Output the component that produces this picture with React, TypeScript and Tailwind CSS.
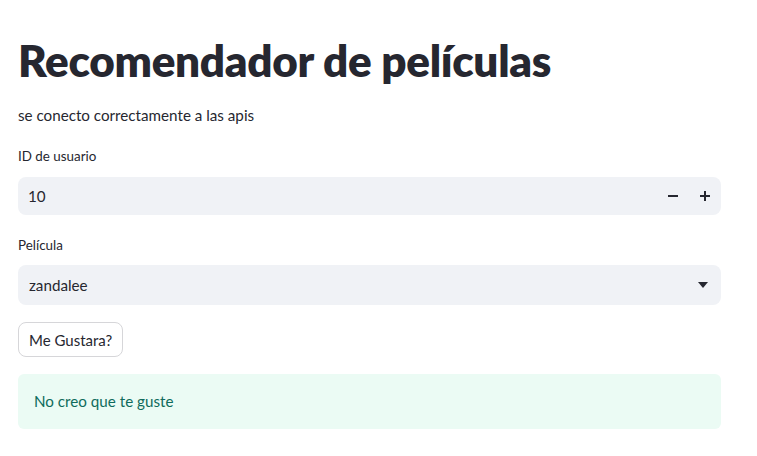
import React from "react";

const font = { fontFamily: '"Source Sans Pro", "Lato", "Liberation Sans", sans-serif' };

export default function App ()
{
  return (
    <div className="min-h-screen bg-white text-[#262730]" style={font}>
      <div className="w-[703px] ml-[18px] pt-[30px] flex flex-col">
        <h1 className="text-[44px] font-extrabold leading-[60px] tracking-[-0.3px]">
          Recomendador de películas
        </h1>
        <p className="text-[15.2px] leading-[24px] mt-[13px]">se conecto correctamente a las apis</p>

        <label className="text-[13.4px] leading-[20px] mt-[19px]">ID de usuario</label>
        <div className="mt-[11px] h-[38px] rounded-[8px] bg-[#f0f2f6] flex items-center pl-[10px]">
          <span className="text-[15.2px] flex-1">10</span>
          <button className="w-[32px] h-full flex items-center justify-center">
            <svg width="10" height="10" viewBox="0 0 10 10"><rect x="0" y="4" width="10" height="2" fill="#262730" /></svg>
          </button>
          <button className="w-[32px] h-full flex items-center justify-center">
            <svg width="10" height="10" viewBox="0 0 10 10"><rect x="0" y="4" width="10" height="2" fill="#262730" /><rect x="4" y="0" width="2" height="10" fill="#262730" /></svg>
          </button>
        </div>

        <label className="text-[13.4px] leading-[20px] mt-[20px]">Película</label>
        <div className="mt-[10px] h-[40px] rounded-[8px] bg-[#f0f2f6] flex items-center pl-[11px] pr-[13px]">
          <span className="text-[15.2px] flex-1">zandalee</span>
          <svg width="10" height="6" viewBox="0 0 10 6"><path d="M0 0 L10 0 L5 6 Z" fill="#262730" /></svg>
        </div>

        <div className="mt-[17px]">
          <button className="h-[35px] px-[10px] rounded-[8px] border border-[#d6d6d9] bg-white text-[15px] leading-[20px]">
            Me Gustara?
          </button>
        </div>

        <div className="mt-[17px] h-[55px] rounded-[6px] bg-[#ebfbf4] flex items-center pl-[16px]">
          <span className="text-[15.2px] text-[#0f6b5c]">No creo que te guste</span>
        </div>
      </div>
    </div>
  );
}
